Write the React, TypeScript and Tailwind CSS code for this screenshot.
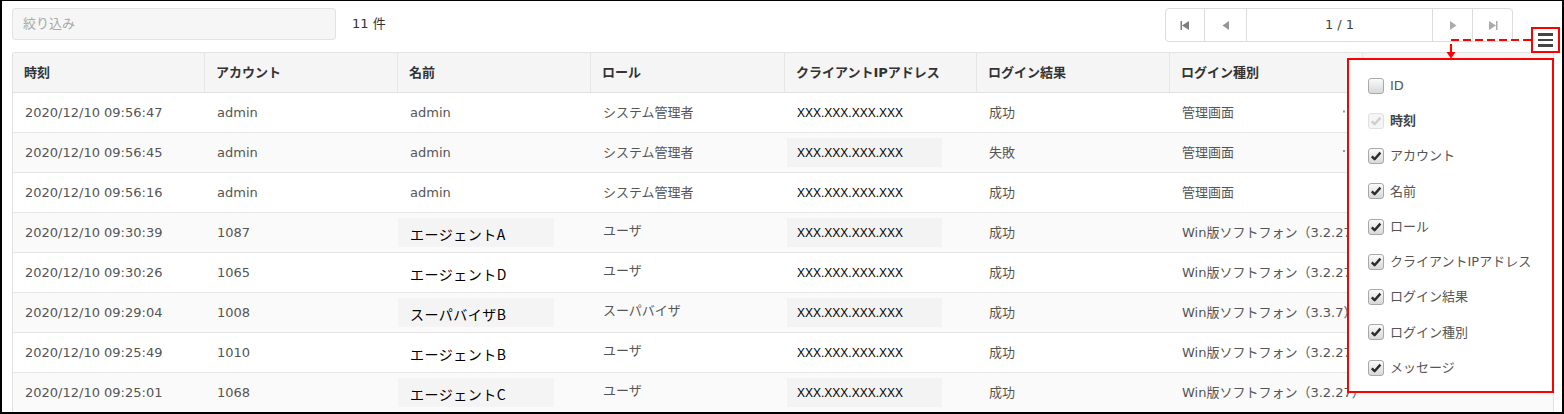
import React from 'react';

const rows = [
  { time: '2020/12/10 09:56:47', account: 'admin', name: 'admin', role: 'システム管理者', result: '成功', kind: '管理画面' },
  { time: '2020/12/10 09:56:45', account: 'admin', name: 'admin', role: 'システム管理者', result: '失敗', kind: '管理画面' },
  { time: '2020/12/10 09:56:16', account: 'admin', name: 'admin', role: 'システム管理者', result: '成功', kind: '管理画面' },
  { time: '2020/12/10 09:30:39', account: '1087', name: 'エージェントA', masked: true, role: 'ユーザ', result: '成功', kind: 'Win版ソフトフォン（3.2.27）' },
  { time: '2020/12/10 09:30:26', account: '1065', name: 'エージェントD', masked: true, role: 'ユーザ', result: '成功', kind: 'Win版ソフトフォン（3.2.27）' },
  { time: '2020/12/10 09:29:04', account: '1008', name: 'スーパバイザB', masked: true, role: 'スーパバイザ', result: '成功', kind: 'Win版ソフトフォン（3.3.7）' },
  { time: '2020/12/10 09:25:49', account: '1010', name: 'エージェントB', masked: true, role: 'ユーザ', result: '成功', kind: 'Win版ソフトフォン（3.2.27）' },
  { time: '2020/12/10 09:25:01', account: '1068', name: 'エージェントC', masked: true, role: 'ユーザ', result: '成功', kind: 'Win版ソフトフォン（3.2.27）' },
];

const headers = ['時刻', 'アカウント', '名前', 'ロール', 'クライアントIPアドレス', 'ログイン結果', 'ログイン種別', 'メッセージ'];

const columns = [
  { label: 'ID', state: 'off' },
  { label: '時刻', state: 'disabled' },
  { label: 'アカウント', state: 'on' },
  { label: '名前', state: 'on' },
  { label: 'ロール', state: 'on' },
  { label: 'クライアントIPアドレス', state: 'on' },
  { label: 'ログイン結果', state: 'on' },
  { label: 'ログイン種別', state: 'on' },
  { label: 'メッセージ', state: 'on' },
];

const grid = 'grid grid-cols-[192px_193px_193px_194px_192px_193px_193px_1fr]';

function Check({ state }: { state: string }) {
  const disabled = state === 'disabled';
  return (
    <span
      className={
        disabled
          ? 'flex h-4 w-4 items-center justify-center rounded-[3px] border border-[#e0e0e0] bg-[#f5f5f5]'
          : 'flex h-4 w-4 items-center justify-center rounded-[3px] border border-[#a8a8a8] bg-gradient-to-b from-[#fafafa] to-[#d8d8d8]'
      }
    >
      {state !== 'off' && (
        <svg width="12" height="12" viewBox="0 0 12 12">
          <path
            d="M1.8 6.4 L4.6 9.2 L10.4 2.6"
            fill="none"
            stroke={disabled ? '#cfcfcf' : '#2b2b2b'}
            strokeWidth="2.4"
            strokeLinejoin="round"
          />
        </svg>
      )}
    </span>
  );
}

function Arrow({ dir, bar, color }: { dir: 'l' | 'r'; bar?: boolean; color: string }) {
  return (
    <svg width="12" height="11" viewBox="0 0 12 11">
      {dir === 'l' ? (
        <>
          {bar && <rect x="1.5" y="1" width="1.5" height="9" fill={color} />}
          <path d={bar ? 'M3 5.5 L10 1 L10 10 Z' : 'M2.5 5.5 L9 1 L9 10 Z'} fill={color} />
        </>
      ) : (
        <>
          {bar && <rect x="9" y="1" width="1.5" height="9" fill={color} />}
          <path d={bar ? 'M9 5.5 L2 1 L2 10 Z' : 'M9.5 5.5 L3 1 L3 10 Z'} fill={color} />
        </>
      )}
    </svg>
  );
}

export default function App() {
  return (
    <div
      className="relative box-border h-[414px] w-[1564px] overflow-hidden border-b-2 border-l-2 border-r-2 border-t border-black bg-white pl-[10px] pt-[7px] text-[13px] text-[#555]"
      style={{ fontFamily: '"DejaVu Sans", "Noto Sans CJK JP", sans-serif' }}
    >
      {/* toolbar */}
      <div className="flex h-[34px] w-[1501px] items-start">
        <div className="flex h-[32px] w-[324px] shrink-0 items-center rounded-[3px] border border-[#e3e3e3] bg-[#f6f6f6] pl-[10px] text-[#a9a9a9]">
          絞り込み
        </div>
        <div className="ml-[16px] flex h-[32px] shrink-0 items-center whitespace-nowrap text-[#333]">11 件</div>
        <div className="ml-auto flex h-[34px] w-[348px] shrink-0 rounded-[4px] border border-[#dcdcdc] bg-white">
          <div className="flex w-[39px] items-center justify-center border-r border-[#dcdcdc]"><Arrow dir="l" bar color="#7d7d7d" /></div>
          <div className="flex w-[42px] items-center justify-center border-r border-[#dcdcdc]"><Arrow dir="l" color="#959595" /></div>
          <div className="flex w-[186px] items-center justify-center border-r border-[#dcdcdc] text-[#444]">1 / 1</div>
          <div className="flex w-[40px] items-center justify-center border-r border-[#dcdcdc]"><Arrow dir="r" color="#ababab" /></div>
          <div className="flex flex-1 items-center justify-center"><Arrow dir="r" bar color="#ababab" /></div>
        </div>
      </div>

      {/* table */}
      <div className="mt-[10px] w-[1542px] rounded-t-[3px] border border-b-0 border-[#e2e2e2]">
        <div className={`${grid} h-[40px] border-b border-[#e2e2e2] bg-[#f5f5f5] font-bold text-[#333]`}>
          {headers.map((h, i) => (
            <div
              key={h}
              className={`flex items-center pl-[11px] ${i < headers.length - 1 ? 'border-r border-[#e6e6e6]' : ''}`}
            >
              {h}
            </div>
          ))}
        </div>
        {rows.map((r, i) => {
          const striped = i % 2 === 1;
          return (
            <div
              key={r.time}
              className={`${grid} h-[40px] border-b border-[#e6e6e6] ${striped ? 'bg-[#fafafa]' : 'bg-white'}`}
            >
              <div className="flex items-center pl-[12px]">{r.time}</div>
              <div className="flex items-center pl-[12px]">{r.account}</div>
              <div className="relative flex items-center pl-[12px]">
                {r.masked ? (
                  <div
                    className={`absolute left-0 top-[5px] flex h-[29px] w-[156px] items-center pl-[12px] pt-[3px] text-[14px] text-black ${striped ? 'bg-[#f4f4f4]' : ''}`}
                    style={{ fontFamily: '"Noto Sans CJK JP", sans-serif', letterSpacing: '0.5px' }}
                  >
                    {r.name}
                  </div>
                ) : (
                  r.name
                )}
              </div>
              <div className={`flex pl-[12px] ${r.masked ? 'items-start pt-[8px]' : 'items-center'}`}>{r.role}</div>
              <div className="relative flex items-center">
                <div
                  className={`ml-[2px] flex h-[29px] w-[155px] items-center pl-[10px] text-[12px] text-black ${striped ? 'bg-[#f3f3f3]' : ''}`}
                  style={{ fontFamily: '"Liberation Sans", Arial, sans-serif' }}
                >
                  XXX.XXX.XXX.XXX
                </div>
              </div>
              <div className="flex items-center pl-[12px]">{r.result}</div>
              <div className="flex items-center overflow-hidden whitespace-nowrap pl-[12px]">{r.kind}</div>
              <div className="flex items-center overflow-hidden whitespace-nowrap pl-[12px]"></div>
            </div>
          );
        })}
      </div>

      {/* column chooser dropdown */}
      <div className="absolute left-[1345px] top-[57px] h-[335px] w-[207px] border-2 border-[#ff0000] bg-white pt-[8px]">
        {columns.map((c) => (
          <div key={c.label} className="flex h-[35.25px] items-center pl-[19px]">
            <Check state={c.state} />
            <span className={`ml-[6px] ${c.state === 'disabled' ? 'font-bold text-[#444]' : 'text-[#555]'}`}>
              {c.label}
            </span>
          </div>
        ))}
      </div>

      {/* menu button */}
      <div className="absolute left-[1529px] top-[26px] flex h-[26px] w-[29px] flex-col items-center justify-center gap-[3px] border-2 border-[#ff0000] bg-white">
        <span className="h-[2.5px] w-[15px] bg-[#444]" />
        <span className="h-[2.5px] w-[15px] bg-[#444]" />
        <span className="h-[2.5px] w-[15px] bg-[#444]" />
      </div>

      {/* annotation arrow */}
      <svg className="pointer-events-none absolute left-[-2px] top-[-1px]" width="1564" height="414">
        <path d="M1531 40 H1451 V53" fill="none" stroke="#ff0000" strokeWidth="2" strokeDasharray="8 4" />
        <path d="M1446.5 52 L1455.5 52 L1451 58.5 Z" fill="#ff0000" />
        <path d="M1343 110.5 h2 v2 h-2 Z M1343 150 h2 v2 h-2 Z" fill="#8f9bb3" />
      </svg>
    </div>
  );
}
